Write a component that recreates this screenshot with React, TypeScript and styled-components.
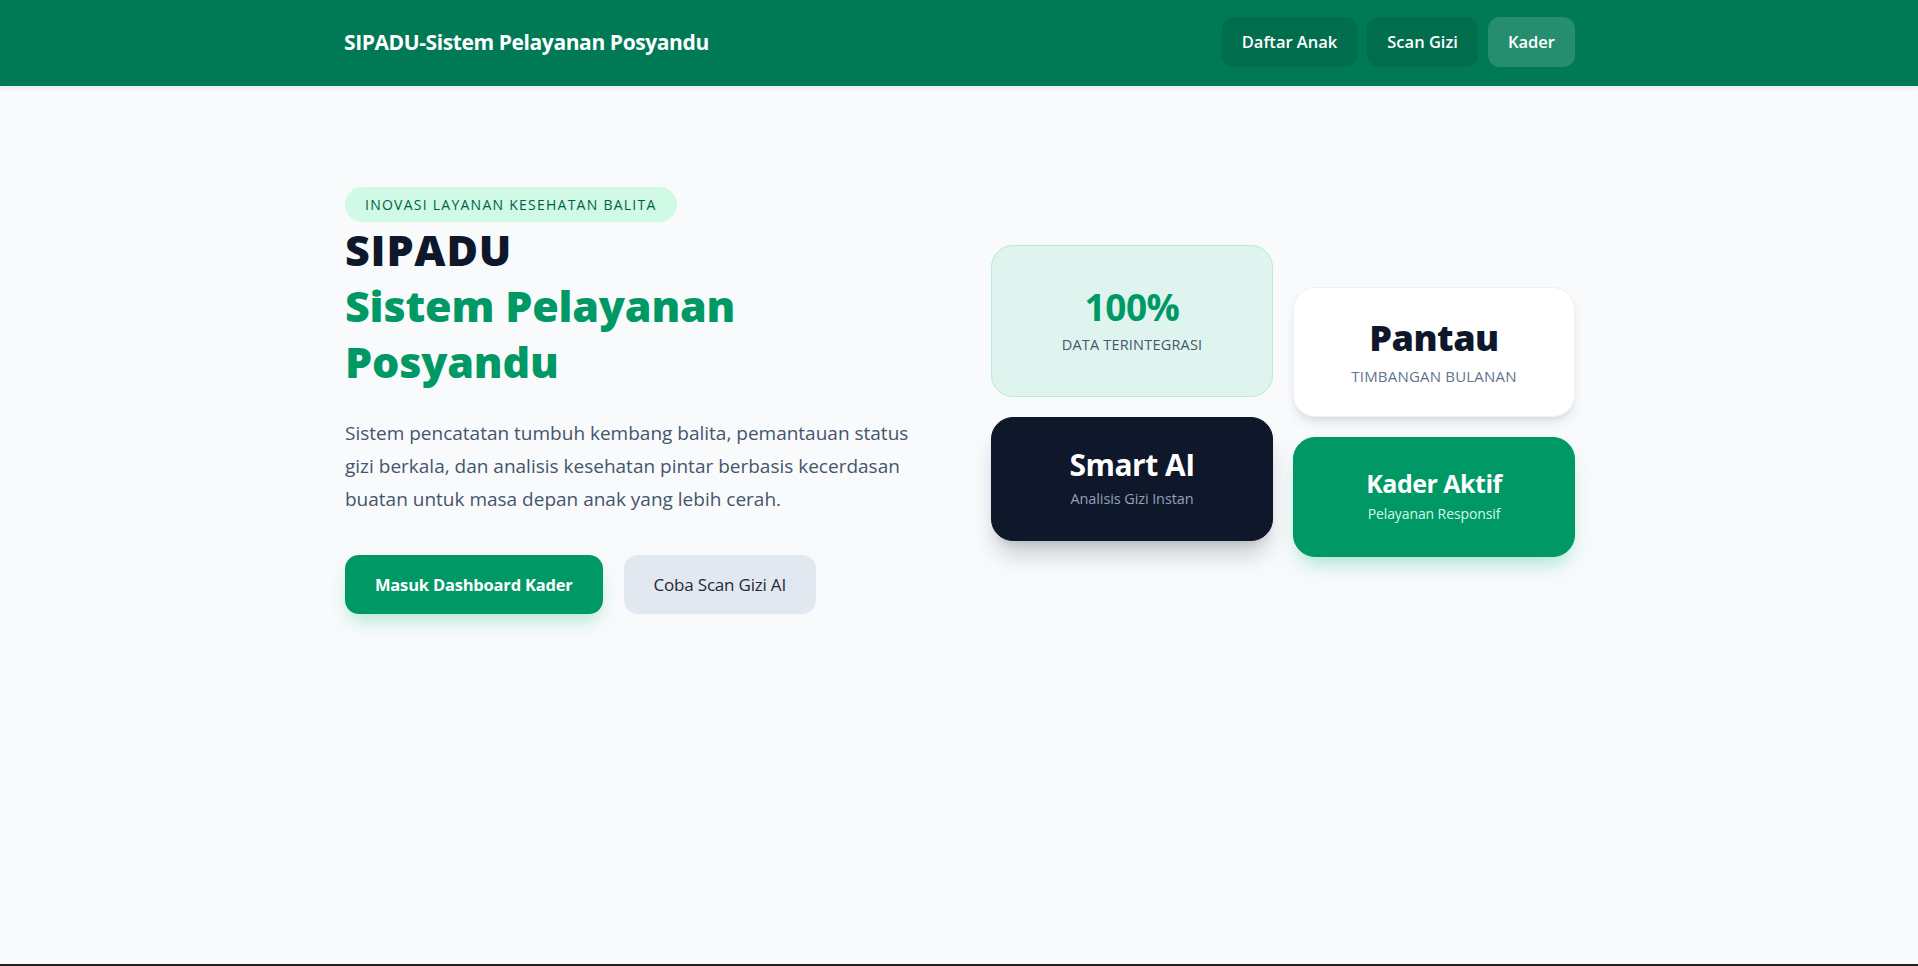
import React from "react";
import styled, { createGlobalStyle } from "styled-components";

const GlobalStyle = createGlobalStyle`
  * {
    box-sizing: border-box;
  }
  body {
    margin: 0;
    background: #f8fafc;
    font-family: "Segoe UI", "Open Sans", "Noto Sans", sans-serif;
    color: #0f172b;
    -webkit-font-smoothing: antialiased;
  }
`;

const Page = styled.div`
  min-height: 100vh;
  border-bottom: 2px solid #1f1f1f;
`;

const Container = styled.div`
  max-width: 1280px;
  margin: 0 auto;
  padding: 0 24px;
`;

const NavBar = styled.nav`
  background: #007a55;
  box-shadow: 0 2px 6px rgba(0, 0, 0, 0.08);
`;

const NavInner = styled(Container)`
  height: 86px;
  display: flex;
  align-items: center;
  justify-content: space-between;
  padding-bottom: 3px;
`;

const Brand = styled.div`
  margin-left: 1px;
  color: #fff;
  font-size: 21px;
  font-weight: 700;
  letter-spacing: -0.4px;
`;

const NavLinks = styled.div`
  display: flex;
  gap: 10px;
`;

const NavLink = styled.a<{ $active?: boolean }>`
  display: flex;
  align-items: center;
  height: 50px;
  padding: 0 20px;
  border-radius: 12px;
  color: #fff;
  font-size: 16.5px;
  font-weight: 600;
  text-decoration: none;
  background: ${(p) => (p.$active ? "rgba(255, 255, 255, 0.15)" : "rgba(0, 96, 69, 0.5)")};
  cursor: pointer;
`;

const Hero = styled(Container)`
  padding-top: 101px;
  display: grid;
  grid-template-columns: 1fr 1fr;
  column-gap: 64px;
  align-items: center;
`;

const Intro = styled.div`
  display: flex;
  flex-direction: column;
  align-items: flex-start;
  padding-left: 2px;
`;

const Badge = styled.span`
  display: inline-block;
  padding: 7px 20px;
  line-height: 21px;
  border-radius: 999px;
  background: #d0fae5;
  color: #006045;
  font-size: 14px;
  font-weight: 500;
  letter-spacing: 1.25px;
  text-transform: uppercase;
`;

const Title = styled.h1`
  margin: 0;
  font-size: 43px;
  line-height: 56px;
  font-weight: 800;
  letter-spacing: -0.2px;
  color: #0f172b;
`;

const TitleLead = styled.span`
  display: block;
  letter-spacing: 0.8px;
`;

const TitleAccent = styled.span`
  display: block;
  color: #009966;
`;

const Lead = styled.p`
  margin: 27px 0 0;
  max-width: 576px;
  font-size: 19px;
  line-height: 33px;
  color: #45556c;
`;

const Actions = styled.div`
  display: flex;
  gap: 21px;
  margin-top: 39px;
`;

const Button = styled.button<{ $primary?: boolean }>`
  border: none;
  padding: 16px 30px;
  line-height: 27px;
  border-radius: 14px;
  font-family: inherit;
  font-size: ${(p) => (p.$primary ? 16.5 : 17)}px;
  font-weight: ${(p) => (p.$primary ? 700 : 500)};
  letter-spacing: -0.2px;
  color: ${(p) => (p.$primary ? "#fff" : "#1d293d")};
  background: ${(p) => (p.$primary ? "#009966" : "#e2e8f0")};
  box-shadow: ${(p) =>
    p.$primary ? "0 10px 18px -4px rgba(0, 188, 125, 0.3)" : "none"};
  cursor: pointer;
`;

const Stats = styled.div`
  display: grid;
  grid-template-columns: 1fr 1fr;
  column-gap: 20px;
`;

const StatColumn = styled.div<{ $offset?: number }>`
  display: flex;
  flex-direction: column;
  gap: 20px;
  padding-top: ${(p) => p.$offset ?? 0}px;
`;

type Tone = "mint" | "white" | "dark" | "green";

const cardBg: Record<Tone, string> = {
  mint: "#dff4ee",
  white: "#ffffff",
  dark: "#0f172b",
  green: "#009966",
};

const cardBorder: Record<Tone, string> = {
  mint: "#b9ead9",
  white: "#eef2f6",
  dark: "#0f172b",
  green: "#009966",
};

const cardShadow: Record<Tone, string> = {
  mint: "none",
  white: "0 8px 14px -4px rgba(15, 23, 43, 0.12), 0 3px 6px -3px rgba(15, 23, 43, 0.08)",
  dark: "0 18px 24px -6px rgba(15, 23, 43, 0.22), 0 8px 10px -6px rgba(15, 23, 43, 0.12)",
  green: "0 12px 20px -6px rgba(0, 188, 125, 0.35)",
};

const Card = styled.div<{ $tone: Tone; $h: number }>`
  height: ${(p) => p.$h}px;
  border-radius: 22px;
  border: 1px solid ${(p) => cardBorder[p.$tone]};
  background: ${(p) => cardBg[p.$tone]};
  box-shadow: ${(p) => cardShadow[p.$tone]};
  display: flex;
  flex-direction: column;
  align-items: center;
  justify-content: center;
  text-align: center;
`;

const StatValue = styled.div<{ $color: string; $size: number; $weight?: number }>`
  color: ${(p) => p.$color};
  font-size: ${(p) => p.$size}px;
  font-weight: ${(p) => p.$weight ?? 700};
  line-height: 1.15;
  letter-spacing: -0.5px;
`;

const StatLabel = styled.div<{ $color: string; $size: number; $caps?: boolean }>`
  margin-top: 7px;
  color: ${(p) => p.$color};
  font-size: ${(p) => p.$size}px;
  font-weight: ${(p) => (p.$caps ? 500 : 400)};
  line-height: 20px;
  letter-spacing: ${(p) => (p.$caps ? "0.2px" : "-0.1px")};
  text-transform: ${(p) => (p.$caps ? "uppercase" : "none")};
`;

export default function App() {
  return (
    <Page>
      <GlobalStyle />
      <NavBar>
        <NavInner>
          <Brand>SIPADU-Sistem Pelayanan Posyandu</Brand>
          <NavLinks>
            <NavLink>Daftar Anak</NavLink>
            <NavLink>Scan Gizi</NavLink>
            <NavLink $active>Kader</NavLink>
          </NavLinks>
        </NavInner>
      </NavBar>

      <Hero>
        <Intro>
          <Badge>Inovasi Layanan Kesehatan Balita</Badge>
          <Title>
            <TitleLead>SIPADU</TitleLead>
            <TitleAccent>Sistem Pelayanan Posyandu</TitleAccent>
          </Title>
          <Lead>
            Sistem pencatatan tumbuh kembang balita, pemantauan status gizi
            berkala, dan analisis kesehatan pintar berbasis kecerdasan buatan
            untuk masa depan anak yang lebih cerah.
          </Lead>
          <Actions>
            <Button $primary>Masuk Dashboard Kader</Button>
            <Button>Coba Scan Gizi AI</Button>
          </Actions>
        </Intro>

        <Stats>
          <StatColumn>
            <Card $tone="mint" $h={152}>
              <StatValue $color="#009966" $size={37}>100%</StatValue>
              <StatLabel $color="#45556c" $size={14.5} $caps>
                Data Terintegrasi
              </StatLabel>
            </Card>
            <Card $tone="dark" $h={124}>
              <StatValue $color="#fff" $size={30}>Smart AI</StatValue>
              <StatLabel $color="#90a1b9" $size={14.5}>
                Analisis Gizi Instan
              </StatLabel>
            </Card>
          </StatColumn>
          <StatColumn $offset={42}>
            <Card $tone="white" $h={130}>
              <StatValue $color="#0f172b" $size={36} $weight={800}>
                Pantau
              </StatValue>
              <StatLabel $color="#62748e" $size={15} $caps>
                Timbangan Bulanan
              </StatLabel>
            </Card>
            <Card $tone="green" $h={120}>
              <StatValue $color="#fff" $size={25}>Kader Aktif</StatValue>
              <StatLabel $color="#d0fae5" $size={14}>
                Pelayanan Responsif
              </StatLabel>
            </Card>
          </StatColumn>
        </Stats>
      </Hero>
    </Page>
  );
}
